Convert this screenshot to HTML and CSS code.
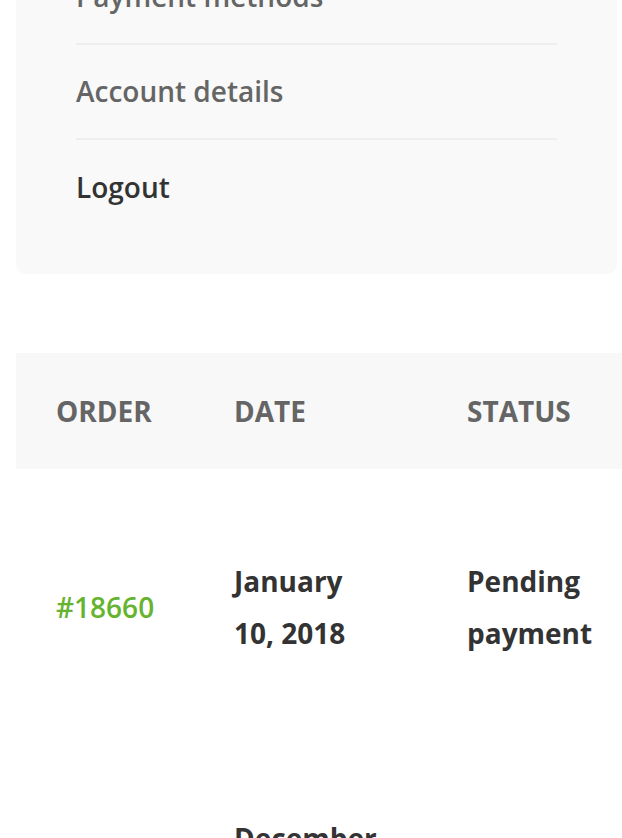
FILE: index.html
```html
<!DOCTYPE html>
<html lang="en">
<head>
<meta charset="utf-8">
<title>My account – Orders</title>
<link rel="stylesheet" href="styles.css">
</head>
<body>
<div class="page">
  <nav class="account-nav">
    <ul class="nav-list">
      <li class="nav-item"><a href="#">Dashboard</a></li>
      <li class="nav-item"><a href="#">Orders</a></li>
      <li class="nav-item"><a href="#">Downloads</a></li>
      <li class="nav-item"><a href="#">Addresses</a></li>
      <li class="nav-item"><a href="#">Payment methods</a></li>
      <li class="nav-item"><a href="#">Account details</a></li>
      <li class="nav-item nav-item--strong"><a href="#">Logout</a></li>
    </ul>
  </nav>

  <div class="orders">
    <table class="orders-table">
      <colgroup>
        <col class="col-order">
        <col class="col-date">
        <col class="col-status">
        <col class="col-total">
        <col class="col-actions">
      </colgroup>
      <thead>
        <tr>
          <th>Order</th>
          <th>Date</th>
          <th>Status</th>
          <th>Total</th>
          <th>Actions</th>
        </tr>
      </thead>
      <tbody>
        <tr>
          <td class="order-num"><a href="#">#18660</a></td>
          <td>January 10, 2018</td>
          <td>Pending payment</td>
          <td>$49.00 for 1 item</td>
          <td>
            <div class="actions">
              <a class="btn" href="#">Pay</a>
              <a class="btn" href="#">View</a>
              <a class="btn" href="#">Cancel</a>
            </div>
          </td>
        </tr>
        <tr>
          <td class="order-num"><a href="#">#18532</a></td>
          <td>December 28, 2017</td>
          <td>Completed</td>
          <td>$123.00 for 2 items</td>
          <td>
            <div class="actions">
              <a class="btn" href="#">View</a>
            </div>
          </td>
        </tr>
      </tbody>
    </table>
  </div>
</div>
</body>
</html>
```

FILE: styles.css
```css
* { box-sizing: border-box; }

html, body {
  margin: 0;
  padding: 0;
  background: #ffffff;
}

body {
  font-family: "Open Sans", "Liberation Sans", sans-serif;
  font-size: 28px;
  color: #333333;
  overflow: hidden;
}

.page {
  margin-top: -470px;
}

a { text-decoration: none; color: inherit; }

/* ---------- account navigation card ---------- */
.account-nav {
  margin: 0 5px 0 16px;
  padding: 40px 60px 41px;
  background: #f9f9f9;
  border-radius: 10px;
}

.nav-list {
  list-style: none;
  margin: 0;
  padding: 0;
}

.nav-item {
  padding: 25px 0 26px;
  border-top: 2px solid #eeeeee;
  font-weight: 600;
  line-height: 42px;
  color: #656565;
}

.nav-item:first-child {
  border-top: 0;
}

.nav-item--strong {
  color: #333333;
  padding-top: 26px;
  padding-bottom: 25px;
}

/* ---------- orders table ---------- */
.orders {
  margin: 79px 0 0 16px;
  overflow: hidden;
}

.orders-table {
  table-layout: fixed;
  border-collapse: collapse;
  width: 1000px;
}

.col-order { width: 178px; }
.col-date { width: 233px; }
.col-status { width: 233px; }
.col-total { width: 180px; }
.col-actions { width: 176px; }

.orders-table thead tr {
  background: #f8f8f8;
}

.orders-table th {
  padding: 37px 40px;
  text-align: left;
  text-transform: uppercase;
  font-weight: 700;
  line-height: 42px;
  color: #656565;
}

.orders-table td {
  padding: 39px 40px 41px;
  vertical-align: middle;
  font-weight: 700;
  line-height: 52px;
  color: #333333;
}

.orders-table td.order-num {
  padding-right: 0;
  white-space: nowrap;
}

.order-num a {
  color: #65b32e;
  font-weight: 600;
}

.actions {
  display: flex;
  flex-direction: column;
  gap: 12px;
}

.btn {
  display: block;
  height: 58px;
  line-height: 58px;
  padding: 0 20px;
  background: #333333;
  color: #ffffff;
  border-radius: 4px;
  text-align: center;
}
```
